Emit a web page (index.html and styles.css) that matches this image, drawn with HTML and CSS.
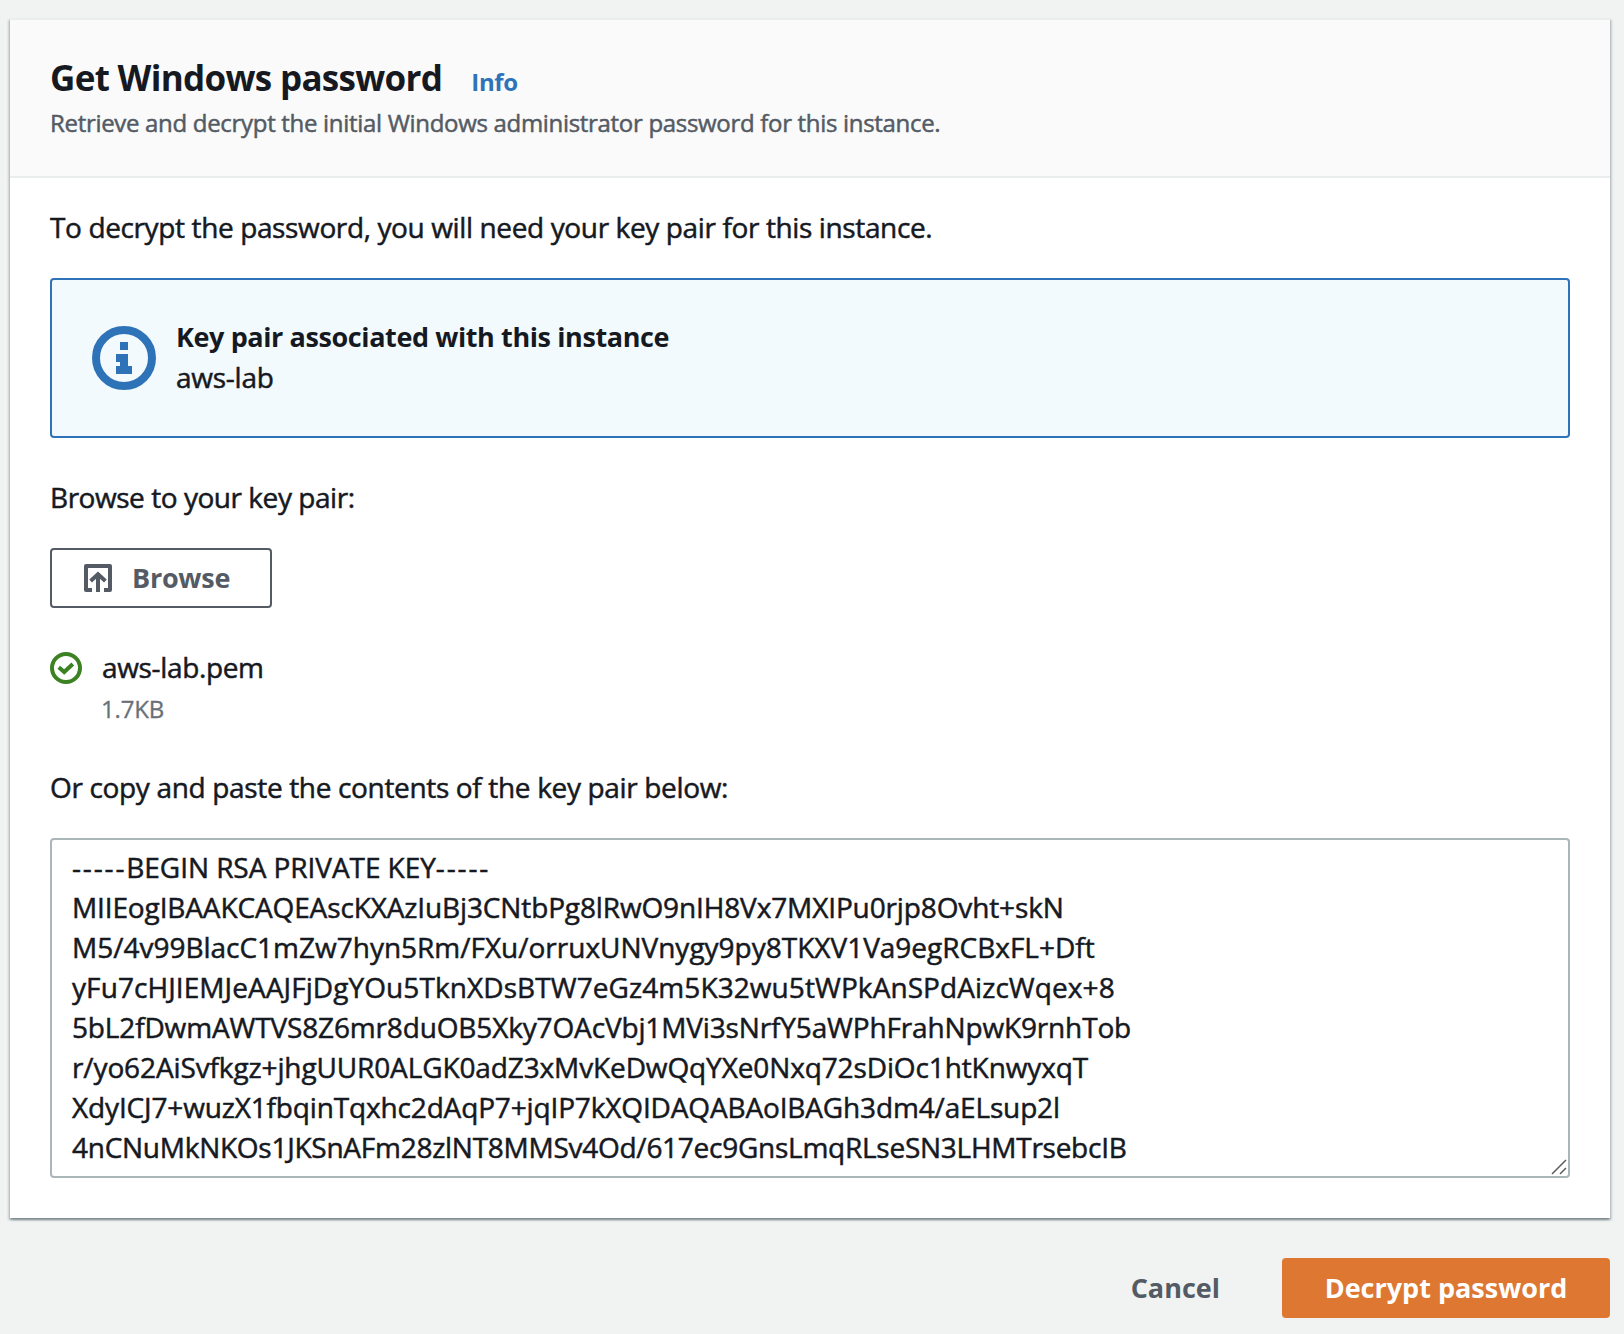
FILE: index.html
```html
<!DOCTYPE html>
<html lang="en">
<head>
<meta charset="utf-8">
<title>Get Windows password</title>
<link rel="stylesheet" href="styles.css">
</head>
<body>
<main class="page">
  <section class="card">
    <header class="card-header">
      <div class="title-row">
        <h1 class="title">Get Windows password</h1>
        <a class="info-link">Info</a>
      </div>
      <p class="description">Retrieve and decrypt the initial Windows administrator password for this instance.</p>
    </header>
    <div class="card-body">
      <p class="text intro">To decrypt the password, you will need your key pair for this instance.</p>
      <div class="alert">
        <svg class="alert-icon" viewBox="0 0 64 64" width="64" height="64">
          <circle cx="32" cy="32" r="28" fill="none" stroke="currentColor" stroke-width="8"/>
          <path d="M28 16h8v8h-8zM24 28h12v12h4v8H24v-8h4v-4h-4z" fill="currentColor"/>
        </svg>
        <div class="alert-text">
          <strong class="alert-title">Key pair associated with this instance</strong>
          <span class="alert-value">aws-lab</span>
        </div>
      </div>
      <p class="text browse-label">Browse to your key pair:</p>
      <button class="button browse" type="button">
        <svg viewBox="0 0 32 32" width="32" height="32" fill="none" stroke="currentColor" stroke-width="4">
          <path d="M10 28H4V4H28V28H22" stroke-linejoin="round"/>
          <path d="M16 30V12.5M8.6 18.9 16 12.3 23.4 18.9"/>
        </svg>
        <span class="browse-text">Browse</span>
      </button>
      <div class="file">
        <svg class="file-icon" viewBox="0 0 32 32" width="32" height="32" fill="none" stroke="currentColor" stroke-width="4">
          <circle cx="16" cy="16" r="14"/>
          <path d="M8.8 15.3 14.2 20 22.8 12"/>
        </svg>
        <div class="file-text">
          <span class="file-name">aws-lab.pem</span>
          <span class="file-size">1.7KB</span>
        </div>
      </div>
      <p class="text paste-label">Or copy and paste the contents of the key pair below:</p>
      <div class="key-field">
        <div class="line l1"><span class="dashes">-----</span>BEGIN RSA PRIVATE KEY<span class="dashes">-----</span></div>
        <div class="line l2">MIIEogIBAAKCAQEAscKXAzIuBj3CNtbPg8lRwO9nIH8Vx7MXIPu0rjp8Ovht+skN</div>
        <div class="line l3">M5/4v99BlacC1mZw7hyn5Rm/FXu/orruxUNVnygy9py8TKXV1Va9egRCBxFL+Dft</div>
        <div class="line l4">yFu7cHJIEMJeAAJFjDgYOu5TknXDsBTW7eGz4m5K32wu5tWPkAnSPdAizcWqex+8</div>
        <div class="line l5">5bL2fDwmAWTVS8Z6mr8duOB5Xky7OAcVbj1MVi3sNrfY5aWPhFrahNpwK9rnhTob</div>
        <div class="line l6">r/yo62AiSvfkgz+jhgUUR0ALGK0adZ3xMvKeDwQqYXe0Nxq72sDiOc1htKnwyxqT</div>
        <div class="line l7">XdyICJ7+wuzX1fbqinTqxhc2dAqP7+jqIP7kXQIDAQABAoIBAGh3dm4/aELsup2l</div>
        <div class="line l8">4nCNuMkNKOs1JKSnAFm28zlNT8MMSv4Od/617ec9GnsLmqRLseSN3LHMTrsebcIB</div>
        <svg class="grip" viewBox="0 0 16 16" width="16" height="16">
          <path d="M1 15 15 1M9 15 15 9" fill="none" stroke="#5a5a5a" stroke-width="1.5"/>
        </svg>
      </div>
    </div>
  </section>
  <footer class="actions">
    <button class="button cancel" type="button">Cancel</button>
    <button class="button primary" type="button">Decrypt password</button>
  </footer>
</main>
</body>
</html>
```
FILE: styles.css
```css
* { box-sizing: border-box; }

body {
  margin: 0;
  background: #f1f3f3;
  color: #16191f;
  font: 28px/40px "Open Sans", "Noto Sans", sans-serif;
  -webkit-text-stroke: 0.5px currentColor;
}

p, h1 { margin: 0; }

.page { padding: 18px 14px 16px 10px; }

.card {
  background: #fff;
  border-top: 2px solid #eaeded;
  box-shadow: 0 2px 2px rgba(0, 28, 36, .3), 2px 2px 2px rgba(0, 28, 36, .15), -2px 2px 2px rgba(0, 28, 36, .15);
}

.card-header {
  height: 158px;
  padding: 36px 40px 0;
  background: #fafafa;
  border-bottom: 2px solid #eaeded;
}

.title-row { display: flex; align-items: baseline; height: 44px; gap: 29px; }
.title { font-size: 35px; line-height: 44px; font-weight: 700; letter-spacing: -.68px; -webkit-text-stroke: 0; }
.info-link { color: #2e73b8; font-size: 24px; font-weight: 700; letter-spacing: -.3px; -webkit-text-stroke: 0; }
.description { margin-top: 7px; font-size: 24px; line-height: 32px; color: #545b64; letter-spacing: -.31px; }

.card-body { padding: 29px 40px 40px; }
.text { white-space: nowrap; }
.intro { letter-spacing: -.375px; }
.browse-label { margin-top: 39px; letter-spacing: -.46px; }
.paste-label { margin-top: 38px; letter-spacing: -.34px; }

.alert {
  display: flex;
  gap: 20px;
  height: 160px;
  margin-top: 31px;
  padding: 37px 40px;
  background: #f2fafd;
  border: 2px solid #2e73b8;
  border-radius: 4px;
}
.alert-icon { margin-top: 9px; color: #2e73b8; }
.alert-text { display: flex; flex-direction: column; }
.alert-title { font-size: 27px; letter-spacing: -.4px; -webkit-text-stroke: 0; }
.alert-value { letter-spacing: -.25px; }

.button {
  display: flex;
  align-items: center;
  height: 60px;
  padding: 0;
  border: 2px solid transparent;
  border-radius: 4px;
  background: transparent;
  color: #545b64;
  font: inherit;
  font-size: 27px;
  font-weight: 700;
  -webkit-text-stroke: 0;
}
.browse { width: 222px; margin-top: 31px; padding-left: 30px; gap: 18px; background: #fff; border-color: #545b64; }
.browse-text { letter-spacing: -.25px; }

.file { display: flex; gap: 20px; margin-top: 39px; }
.file-icon { margin-top: 5px; color: #3c8122; }
.file-text { display: flex; flex-direction: column; gap: 2px; }
.file-name { letter-spacing: -.35px; }
.file-size { margin-left: -1px; font-size: 24px; color: #687078; letter-spacing: -.2px; -webkit-text-stroke: .3px; }

.key-field {
  position: relative;
  height: 340px;
  margin-top: 31px;
  padding: 7px 20px;
  background: #fff;
  border: 2px solid #aab7b8;
  border-radius: 4px;
}
.line { white-space: nowrap; }
.l1 { letter-spacing: -.06px; }
.dashes { letter-spacing: 1.85px; }
.l2 { letter-spacing: -.13px; }
.l3 { letter-spacing: -.01px; }
.l4 { letter-spacing: .08px; }
.l5 { letter-spacing: -.15px; }
.l6 { letter-spacing: -.12px; }
.l7 { letter-spacing: -.15px; }
.l8 { letter-spacing: -.26px; }
.grip { position: absolute; right: 1px; bottom: 1px; }

.actions { display: flex; justify-content: flex-end; gap: 20px; margin-top: 40px; }
.cancel { padding-left: 41px; padding-right: 40px; }
.primary { width: 328px; justify-content: center; background: #dd7732; color: #fff; }
```
